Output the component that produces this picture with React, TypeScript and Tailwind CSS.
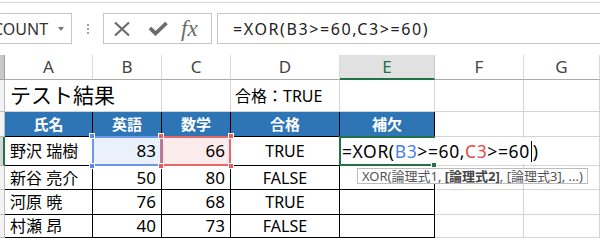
import React from 'react'

// Excel 風のシート — XOR 関数を E3 で編集中の画面

const jp = "font-['Noto_Sans','Noto_Sans_CJK_JP',sans-serif]"
const gridLine = 'border-r border-b border-[#d4d4d4]'
const tableLine = 'border-r border-b border-black'

function Handle({ pos, color }: { pos: string; color: string }) {
  return <span className={`absolute z-20 h-[6px] w-[6px] border border-white ${pos} ${color}`} />
}

function RowHead({ active = false }: { active?: boolean }) {
  return (
    <div
      className={
        active
          ? 'border-b border-r-2 border-b-[#bdbdbd] border-r-[#217346] bg-[#d6d6d6]'
          : 'border-b border-r border-[#bdbdbd] bg-[#f3f3f3]'
      }
    />
  )
}

export default function App() {
  const cols = ['A', 'B', 'C', 'D', 'E', 'F', 'G']
  const rows = [
    { name: '新谷 亮介', en: 50, ma: 80, ok: 'FALSE' },
    { name: '河原 暁', en: 76, ma: 68, ok: 'TRUE' },
    { name: '村瀬 昂', en: 40, ma: 73, ok: 'FALSE' },
  ]

  return (
    <div className={`relative h-[238px] w-[600px] overflow-hidden bg-white text-black ${jp}`}>
      {/* 数式バー */}
      <div className="h-[55px] pt-[2px]">
        <div className="border-t border-[#d5d5d5] pt-[10px]">
          <div className="flex h-[31px] items-stretch">
            <div className="-ml-[20px] flex w-[92px] items-center border border-[#c6c6c6] pl-[12px] text-[16px] text-[#333]">
              <span>COUNT</span>
              <span className="ml-auto mr-[7px] h-0 w-0 border-x-[3.5px] border-t-[4px] border-x-transparent border-t-[#777]" />
            </div>
            <div className="flex w-[31px] flex-col items-center justify-center gap-[2px]">
              <span className="h-[2px] w-[2px] bg-[#a0a0a0]" />
              <span className="h-[2px] w-[2px] bg-[#a0a0a0]" />
              <span className="h-[2px] w-[2px] bg-[#a0a0a0]" />
            </div>
            <div className="flex w-[109px] items-center border border-[#c6c6c6] pl-[9px]">
              <svg width="18" height="16" viewBox="0 0 18 16" className="mr-[17px]">
                <path d="M2 1.5 16 14.5M16 1.5 2 14.5" stroke="#6b6b6b" strokeWidth="2.2" fill="none" />
              </svg>
              <svg width="20" height="15" viewBox="0 0 20 15" className="mr-[13px]">
                <path d="M2 7 7.5 12.5 18.5 2" stroke="#6b6b6b" strokeWidth="3.8" fill="none" />
              </svg>
              <span className="font-['Liberation_Serif',serif] text-[23px] italic leading-none text-[#6b6b6b]">
                fx
              </span>
            </div>
            <div className="-mr-[4px] ml-[5px] flex flex-1 items-center border border-[#c6c6c6] pl-[15px] text-[16px] tracking-[1.6px] text-[#222]">
              =XOR(B3&gt;=60,C3&gt;=60)
            </div>
          </div>
        </div>
      </div>

      {/* シート */}
      <div className="grid grid-cols-[5px_88px_69px_69px_109px_95px_89px_76px] grid-rows-[25px_32px_25px_29px_24px_25px_23px] text-[16px]">
        {/* 列見出し */}
        <div className="border-b border-r border-[#9f9f9f] bg-[#c8c8c8]" />
        {cols.map((c) => (
          <div
            key={c}
            className={
              c === 'E'
                ? 'flex items-center justify-center border-r border-b-2 border-r-[#c8c8c8] border-b-[#217346] bg-[#e1e1e1] text-[17px] text-[#217346]'
                : 'flex items-center justify-center border-r border-b border-r-[#dadada] border-b-[#ababab] text-[17px] text-[#444]'
            }
          >
            {c}
          </div>
        ))}

        {/* 1行目 */}
        <RowHead />
        <div className="relative z-10 flex items-center border-b border-[#d4d4d4] pl-[5px] text-[21px] whitespace-nowrap">
          テスト結果
        </div>
        <div className={gridLine} />
        <div className={gridLine} />
        <div className={`flex items-center pl-[4px] text-[16px] whitespace-nowrap ${gridLine}`}>合格：TRUE</div>
        <div className={gridLine} />
        <div className={gridLine} />
        <div className={gridLine} />

        {/* 2行目 見出し */}
        <RowHead />
        {['氏名', '英語', '数学', '合格', '補欠'].map((h) => (
          <div
            key={h}
            className={`flex items-center justify-center bg-[#2e75b6] text-[15px] font-bold text-white ${tableLine}`}
          >
            {h}
          </div>
        ))}
        <div className={gridLine} />
        <div className={gridLine} />

        {/* 3行目 編集中 */}
        <RowHead active />
        <div className={`flex items-center pl-[5px] whitespace-nowrap ${tableLine}`}>野沢 瑞樹</div>
        <div className={`relative flex items-center justify-end bg-[#eaf0fc] pr-[5px] text-[17px] ${tableLine}`}>
          83
          <span className="absolute -left-px -top-px bottom-[-1px] right-[-1px] border-2 border-[#6d97ea]" />
          <Handle pos="-left-[4px] -top-[4px]" color="bg-[#5a89e6]" />
          <Handle pos="-left-[4px] -bottom-[4px]" color="bg-[#5a89e6]" />
        </div>
        <div className={`relative flex items-center justify-end bg-[#fdecec] pr-[5px] text-[17px] ${tableLine}`}>
          66
          <span className="absolute -left-px -top-px bottom-[-1px] right-[-1px] border-2 border-[#e86868]" />
          <Handle pos="-left-[4px] -top-[4px]" color="bg-[#e65c5c]" />
          <Handle pos="-left-[4px] -bottom-[4px]" color="bg-[#e65c5c]" />
          <Handle pos="-right-[4px] -top-[4px]" color="bg-[#e65c5c]" />
          <Handle pos="-right-[4px] -bottom-[4px]" color="bg-[#e65c5c]" />
        </div>
        <div className={`flex items-center justify-center ${tableLine}`}>TRUE</div>
        <div className="relative z-10 -ml-px -mt-px border-2 border-[#217346]">
          <div className="absolute left-0 top-0 bottom-0 flex w-[212px] items-center bg-white pl-[1px] text-[17.5px] tracking-[0.6px] whitespace-nowrap">
            =XOR(<span className="text-[#4a7fe6]">B3</span>&gt;=60,<span className="text-[#e64848]">C3</span>&gt;=60
            <span className="mx-[1px] h-[21px] w-px bg-black" />)
          </div>
          <span className="absolute -right-[4px] -bottom-[4px] h-[6px] w-[6px] border border-white bg-[#217346]" />
        </div>
        <div className={gridLine} />
        <div className={gridLine} />

        {/* 4〜6行目 */}
        {rows.map((r) => (
          <React.Fragment key={r.name}>
            <RowHead />
            <div className={`flex items-center pl-[5px] whitespace-nowrap ${tableLine}`}>{r.name}</div>
            <div className={`flex items-center justify-end pr-[5px] text-[17px] ${tableLine}`}>{r.en}</div>
            <div className={`flex items-center justify-end pr-[5px] text-[17px] ${tableLine}`}>{r.ma}</div>
            <div className={`flex items-center justify-center ${tableLine}`}>{r.ok}</div>
            <div className={tableLine} />
            <div className={gridLine} />
            <div className={gridLine} />
          </React.Fragment>
        ))}
      </div>

      {/* 関数ヒント */}
      <div className="pointer-events-none absolute left-[357px] top-[168px] z-30 border border-[#bcbcbc] bg-white px-[4px] text-[13px] leading-[14px] whitespace-nowrap text-[#555]">
        XOR(論理式1, <b className="text-[#444]">[論理式2]</b>, [論理式3], ...)
      </div>
    </div>
  )
}
